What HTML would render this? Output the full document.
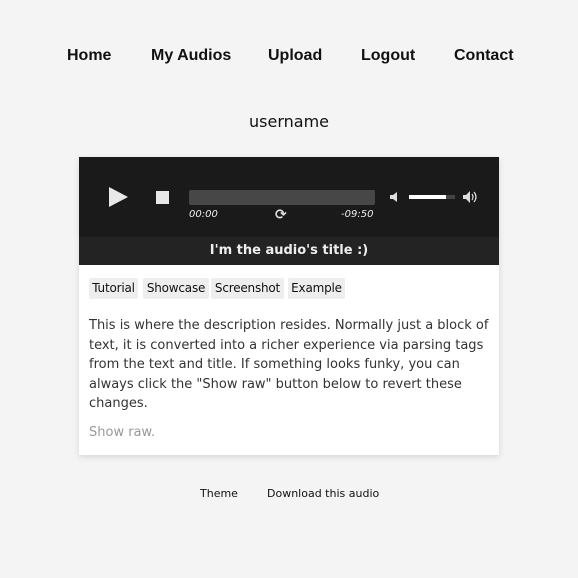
<!DOCTYPE html>
<html><head><style>
body{margin:0;background:#f4f4f4;width:578px;height:578px;position:relative;font-family:"DejaVu Sans","Liberation Sans",sans-serif;color:#111}
.a{position:absolute;white-space:nowrap}
.nav{font-size:16px;font-weight:bold;top:47px;font-family:"Liberation Sans",sans-serif}
.card{position:absolute;left:79px;top:157px;width:420px;height:298px;background:#fff;box-shadow:0 2px 6px rgba(0,0,0,.12)}
.pl{position:absolute;left:0;top:0;width:420px;height:80px;background:#1a1a1a}
.tb{position:absolute;left:0;top:80px;width:420px;height:28px;background:#232323;color:#eee;font-weight:bold;font-size:13px;text-align:center;line-height:28px}
.tag{position:absolute;top:121px;height:21px;background:#eee;font-size:12px;line-height:21px;text-align:center;border-radius:2px;color:#111;letter-spacing:-0.2px}
.desc{position:absolute;left:10px;top:159px;width:400px;font-size:13px;line-height:19.5px;color:#333}
.t{font-size:10px;font-style:italic;color:#eee;top:52px}
</style></head><body>
<div class="a nav" style="left:67px">Home</div>
<div class="a nav" style="left:151px">My Audios</div>
<div class="a nav" style="left:268px">Upload</div>
<div class="a nav" style="left:361px">Logout</div>
<div class="a nav" style="left:454px">Contact</div>
<div class="a" style="left:0;width:578px;text-align:center;top:112px;font-size:16px">username</div>
<div class="card">
<div class="pl">
<svg class="a" style="left:30px;top:30px" width="20" height="20"><polygon points="0,0 19,10 0,20" fill="#e8e8e8"/></svg>
<div class="a" style="left:77px;top:34px;width:13px;height:13px;background:#e8e8e8"></div>
<div class="a" style="left:110px;top:33px;width:186px;height:15px;background:#474747;border-radius:2px"></div>
<div class="a t" style="left:110px">00:00</div>
<div class="a" style="left:196px;top:50px;color:#ddd;font-size:14px;font-weight:bold">⟳</div>
<div class="a t" style="left:262px">-09:50</div>
<svg class="a" style="left:311px;top:35px" width="10" height="10"><polygon points="0,3 3,3 7,0 7,10 3,7 0,7" fill="#ddd"/></svg>
<div class="a" style="left:330px;top:38px;width:37px;height:4px;background:#fff"></div>
<div class="a" style="left:367px;top:38px;width:9px;height:4px;background:#444"></div>
<svg class="a" style="left:384px;top:34px" width="16" height="12"><polygon points="0,4 3,4 7,0 7,12 3,8 0,8" fill="#ddd"/><path d="M9 3q2 3 0 6M11 1q4 5 0 10" stroke="#ddd" fill="none" stroke-width="1.2"/></svg>
</div>
<div class="tb">I'm the audio's title :)</div>
<div class="tag" style="left:10px;width:49px">Tutorial</div>
<div class="tag" style="left:64px;width:66px">Showcase</div>
<div class="tag" style="left:132px;width:73px">Screenshot</div>
<div class="tag" style="left:209px;width:57px">Example</div>
<div class="desc">This is where the description resides. Normally just a block of text, it is converted into a richer experience via parsing tags from the text and title. If something looks funky, you can always click the "Show raw" button below to revert these changes.</div>
<div class="a" style="left:10px;top:268px;font-size:13px;color:#999">Show raw.</div>
</div>
<div class="a" style="left:200px;top:487px;font-size:11px">Theme</div>
<div class="a" style="left:267px;top:487px;font-size:11px">Download this audio</div>
</body></html>
